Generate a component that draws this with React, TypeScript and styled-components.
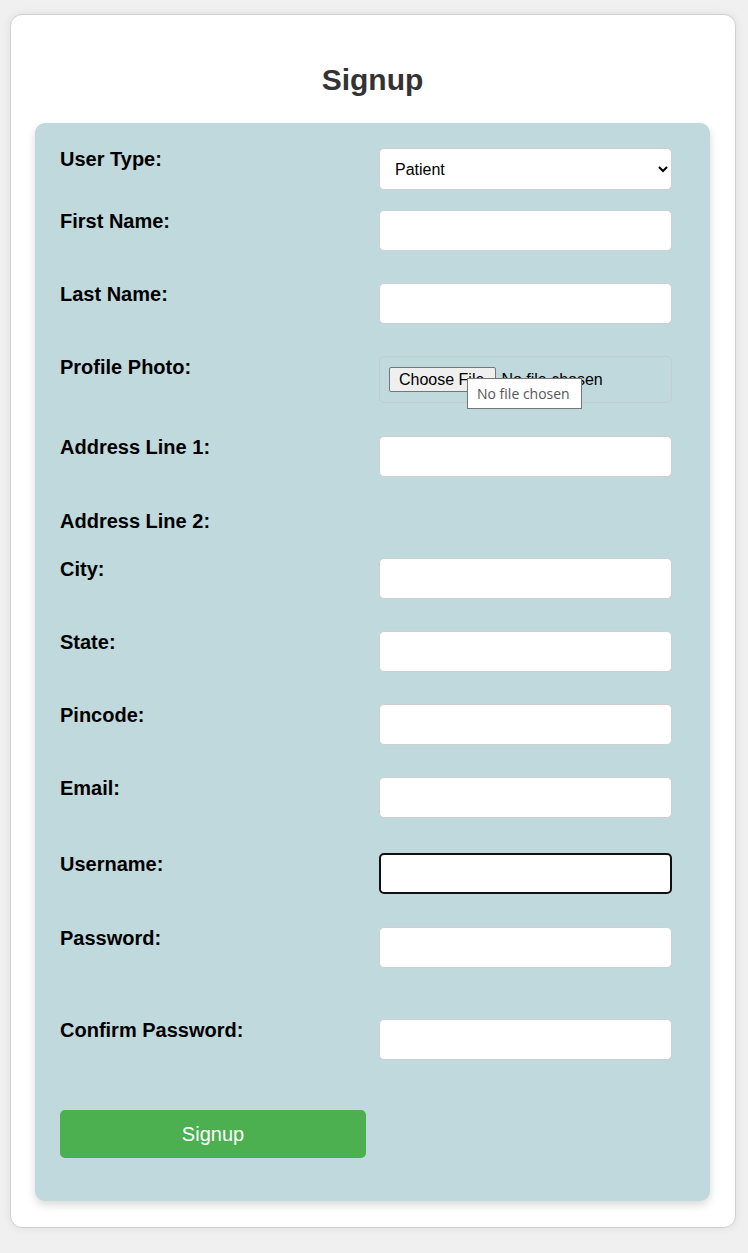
import React from "react";
import styled, { createGlobalStyle } from "styled-components";

const GlobalStyle = createGlobalStyle`
  html, body { margin: 0; padding: 0; background: #f0f0f0; }
  body { font-family: "Liberation Sans", Arial, sans-serif; }
  * { box-sizing: border-box; }
`;

const Page = styled.div`
  padding: 14px 12px 26px 10px;
`;

const Card = styled.div`
  background: #fff;
  border: 1px solid #d0d0d0;
  border-radius: 12px;
  box-shadow: 0 0 10px rgba(0, 0, 0, 0.08);
  padding: 47px 25px 26px 24px;
`;

const Title = styled.h2`
  margin: 0 0 26px;
  text-align: center;
  font-size: 30px;
  line-height: 35px;
  font-weight: bold;
  color: #333;
`;

const Panel = styled.form`
  background: #c0d9dd;
  border-radius: 10px;
  box-shadow: 0 4px 8px rgba(0, 0, 0, 0.15);
  padding: 25px 25px 43px 25px;
  display: flex;
  flex-direction: column;
`;

const Row = styled.div<{ $mb: number }>`
  display: grid;
  grid-template-columns: 319px 293px;
  align-items: start;
  margin-bottom: ${(p) => p.$mb}px;
`;

const Label = styled.label`
  font-size: 20px;
  line-height: 22px;
  font-weight: bold;
  color: #000;
`;

const TextInput = styled.input<{ $focused?: boolean }>`
  width: 293px;
  height: 41px;
  background: #fff;
  border: ${(p) => (p.$focused ? "2px solid #111" : "1px solid #cfcfcf")};
  border-radius: 5px;
  padding: 0 10px;
  font: 16px "Liberation Sans", Arial, sans-serif;
  outline: none;
`;

const Select = styled.select`
  width: 293px;
  height: 42px;
  background: #fff;
  border: 1px solid #cfcfcf;
  border-radius: 5px;
  padding: 0 10px 0 11px;
  font: 16px "Liberation Sans", Arial, sans-serif;
  color: #000;
`;

const FileBox = styled.div`
  position: relative;
  width: 293px;
  height: 47px;
  border: 1px solid #c4cccd;
  border-radius: 5px;
  padding: 10px 9px;
`;

const FileInput = styled.input`
  font: 16px "Liberation Sans", Arial, sans-serif;
  color: #000;
  &::file-selector-button {
    font: 16px "Liberation Sans", Arial, sans-serif;
    height: 25px;
    padding: 0 11px 0 9px;
    margin-right: 5px;
    border: 1px solid #767676;
    border-radius: 2px;
    background: #efefef;
    color: #000;
  }
`;

const Tooltip = styled.div`
  position: absolute;
  left: 87px;
  top: 21px;
  width: 115px;
  height: 31px;
  background: #fff;
  border: 1px solid #767676;
  font: 14px "Open Sans", "Noto Sans", sans-serif;
  color: #555;
  display: flex;
  align-items: center;
  padding-left: 9px;
  white-space: nowrap;
`;

const SubmitButton = styled.button`
  width: 306px;
  height: 48px;
  background: #4caf50;
  color: #fff;
  border: none;
  border-radius: 5px;
  font: 20px "Liberation Sans", Arial, sans-serif;
`;

type Field = { label: string; mb: number; focused?: boolean; type?: string; none?: boolean };

const fieldsA: Field[] = [
  { label: "First Name:", mb: 32 },
  { label: "Last Name:", mb: 32 },
];

const fieldsB: Field[] = [
  { label: "Address Line 1:", mb: 33 },
  { label: "Address Line 2:", mb: 26, none: true },
  { label: "City:", mb: 32 },
  { label: "State:", mb: 32 },
  { label: "Pincode:", mb: 32 },
  { label: "Email:", mb: 35, type: "email" },
  { label: "Username:", mb: 33, focused: true },
  { label: "Password:", mb: 51, type: "password" },
  { label: "Confirm Password:", mb: 50, type: "password" },
];

const renderField = (f: Field) => (
  <Row key={f.label} $mb={f.mb}>
    <Label>{f.label}</Label>
    {f.none ? null : <TextInput type={f.type || "text"} $focused={f.focused} />}
  </Row>
);

export default function App() {
  return (
    <>
      <GlobalStyle />
      <Page>
        <Card>
          <Title>Signup</Title>
          <Panel onSubmit={(e) => e.preventDefault()}>
            <Row $mb={20}>
              <Label>User Type:</Label>
              <Select defaultValue="Patient">
                <option>Patient</option>
                <option>Doctor</option>
              </Select>
            </Row>
            {fieldsA.map(renderField)}
            <Row $mb={33}>
              <Label>Profile Photo:</Label>
              <FileBox>
                <FileInput type="file" />
                <Tooltip>No file chosen</Tooltip>
              </FileBox>
            </Row>
            {fieldsB.map(renderField)}
            <SubmitButton type="submit">Signup</SubmitButton>
          </Panel>
        </Card>
      </Page>
    </>
  );
}
